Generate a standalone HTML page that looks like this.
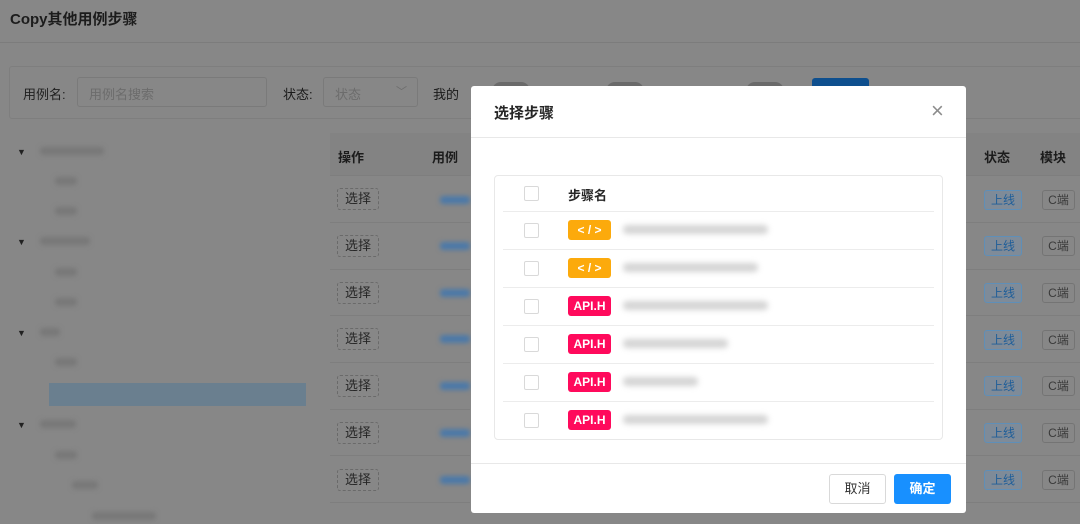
<!DOCTYPE html>
<html style="background:#878787"><head><meta charset="utf-8"><style>
*{box-sizing:border-box;margin:0;padding:0}
html,body{background:#878787}
body{width:1080px;height:524px;overflow:hidden;font-family:"Liberation Sans","Noto Sans CJK SC",sans-serif;position:relative;color:#1a1a1a}
.a{position:absolute}
.blur{filter:blur(2.5px);background:#787878;height:8px;border-radius:3px}
.sel{position:absolute;left:337px;width:42px;height:22px;border:1px dashed #6a6a6a;border-radius:3px;font-size:13px;color:#262626;text-align:center;line-height:20px}
.tagS{position:absolute;left:984px;width:38px;height:20px;border:1px solid #5f8fb8;background:#7f8b98;border-radius:3px;color:#1f5e99;font-size:12px;text-align:center;line-height:18px}
.tagC{position:absolute;left:1042px;width:33px;height:20px;border:1px solid #747474;border-radius:3px;color:#3a3a3a;font-size:12px;text-align:center;line-height:18px}
.hl{position:absolute;left:330px;width:140px;height:1px;background:#7e7e7e}
.modal{position:absolute;left:471px;top:86px;width:495px;height:427px;background:#fff;border-radius:3px}
.cb{position:absolute;left:29px;width:15px;height:15px;border:1px solid #d9d9d9;border-radius:2px;background:#fff}
.badge{position:absolute;left:73px;width:43px;height:20px;border-radius:3px;color:#fff;font-size:12px;font-weight:bold;text-align:center;line-height:20px}
.y{background:#fcaa0c}.p{background:#ff0a5c}
.rl{position:absolute;left:8px;right:8px;height:1px;background:#ececec}
.mb{position:absolute;height:9px;border-radius:4px;background:#d4d4d4;filter:blur(3px)}
</style></head><body>
<div class="a" style="left:10px;top:8px;font-size:15px;font-weight:bold;color:#1c1c1c">Copy其他用例步骤</div>
<div class="a" style="left:0;top:42px;width:1080px;height:1px;background:#7c7c7c"></div>
<div class="a" style="left:9px;top:66px;width:1080px;height:53px;border:1px solid #7e7e7e;border-radius:3px"></div>
<div class="a" style="left:23px;top:84px;font-size:13px;color:#1f1f1f">用例名:</div>
<div class="a" style="left:77px;top:77px;width:190px;height:30px;border:1px solid #7a7a7a;border-radius:3px;font-size:13px;color:#6c6c6c;padding:6px 11px">用例名搜索</div>
<div class="a" style="left:283px;top:84px;font-size:13px">状态:</div>
<div class="a" style="left:323px;top:77px;width:95px;height:30px;border:1px solid #7a7a7a;border-radius:3px;font-size:13px;color:#6c6c6c;padding:6px 11px">状态<span style="position:absolute;right:10px;top:5px;color:#6c6c6c;font-size:11px">﹀</span></div>
<div class="a" style="left:433px;top:84px;font-size:13px">我的</div>
<div class="a" style="left:492px;top:82px;width:38px;height:18px;border-radius:9px;background:#6a6a6a"></div>
<div class="a" style="left:606px;top:82px;width:38px;height:18px;border-radius:9px;background:#6a6a6a"></div>
<div class="a" style="left:746px;top:82px;width:38px;height:18px;border-radius:9px;background:#6a6a6a"></div>
<div class="a" style="left:812px;top:78px;width:57px;height:30px;border-radius:3px;background:#0e4f8e"></div>
<div class="a" style="left:17px;top:147px;font-size:9px;color:#222">▼</div><div class="a blur" style="left:40px;top:147px;width:64px"></div>
<div class="a blur" style="left:55px;top:177px;width:22px"></div>
<div class="a blur" style="left:55px;top:207px;width:22px"></div>
<div class="a" style="left:17px;top:237px;font-size:9px;color:#222">▼</div><div class="a blur" style="left:40px;top:237px;width:50px"></div>
<div class="a blur" style="left:55px;top:268px;width:22px"></div>
<div class="a blur" style="left:55px;top:298px;width:22px"></div>
<div class="a" style="left:17px;top:328px;font-size:9px;color:#222">▼</div><div class="a blur" style="left:40px;top:328px;width:20px"></div>
<div class="a blur" style="left:55px;top:358px;width:22px"></div>
<div class="a" style="left:49px;top:383px;width:257px;height:23px;background:#6a7f8f"></div>
<div class="a" style="left:17px;top:420px;font-size:9px;color:#222">▼</div><div class="a blur" style="left:40px;top:420px;width:36px"></div>
<div class="a blur" style="left:55px;top:451px;width:22px"></div>
<div class="a blur" style="left:72px;top:481px;width:26px"></div>
<div class="a blur" style="left:92px;top:512px;width:64px"></div>
<div class="a" style="left:330px;top:133px;width:750px;height:43px;background:#838383"></div>
<div class="a" style="left:338px;top:147px;font-size:13px;font-weight:bold;color:#1c1c1c">操作</div>
<div class="a" style="left:432px;top:147px;font-size:13px;font-weight:bold;color:#1c1c1c">用例</div>
<div class="a" style="left:984px;top:147px;font-size:13px;font-weight:bold;color:#1c1c1c">状态</div>
<div class="a" style="left:1040px;top:147px;font-size:13px;font-weight:bold;color:#1c1c1c">模块</div>
<div class="a" style="left:966px;top:175px;width:114px;height:1px;background:#7e7e7e"></div>
<div class="hl" style="top:175px"></div>
<div class="sel" style="top:188px">选择</div><div class="hl" style="top:222px"></div>
<div class="sel" style="top:235px">选择</div><div class="hl" style="top:269px"></div>
<div class="sel" style="top:282px">选择</div><div class="hl" style="top:315px"></div>
<div class="sel" style="top:328px">选择</div><div class="hl" style="top:362px"></div>
<div class="sel" style="top:375px">选择</div><div class="hl" style="top:409px"></div>
<div class="sel" style="top:422px">选择</div><div class="hl" style="top:455px"></div>
<div class="sel" style="top:469px">选择</div><div class="hl" style="top:502px"></div>
<div class="a blur" style="left:440px;top:196px;width:30px;background:#4c79a8"></div>
<div class="a blur" style="left:440px;top:242px;width:30px;background:#4c79a8"></div>
<div class="a blur" style="left:440px;top:289px;width:30px;background:#4c79a8"></div>
<div class="a blur" style="left:440px;top:335px;width:30px;background:#4c79a8"></div>
<div class="a blur" style="left:440px;top:382px;width:30px;background:#4c79a8"></div>
<div class="a blur" style="left:440px;top:429px;width:30px;background:#4c79a8"></div>
<div class="a blur" style="left:440px;top:476px;width:30px;background:#4c79a8"></div>
<div class="tagS" style="top:190px">上线</div><div class="tagC" style="top:190px">C端</div>
<div class="tagS" style="top:236px">上线</div><div class="tagC" style="top:236px">C端</div>
<div class="tagS" style="top:283px">上线</div><div class="tagC" style="top:283px">C端</div>
<div class="tagS" style="top:330px">上线</div><div class="tagC" style="top:330px">C端</div>
<div class="tagS" style="top:376px">上线</div><div class="tagC" style="top:376px">C端</div>
<div class="tagS" style="top:423px">上线</div><div class="tagC" style="top:423px">C端</div>
<div class="tagS" style="top:470px">上线</div><div class="tagC" style="top:470px">C端</div>
<div class="a" style="left:966px;top:222px;width:114px;height:1px;background:#7e7e7e"></div>
<div class="a" style="left:966px;top:269px;width:114px;height:1px;background:#7e7e7e"></div>
<div class="a" style="left:966px;top:315px;width:114px;height:1px;background:#7e7e7e"></div>
<div class="a" style="left:966px;top:362px;width:114px;height:1px;background:#7e7e7e"></div>
<div class="a" style="left:966px;top:409px;width:114px;height:1px;background:#7e7e7e"></div>
<div class="a" style="left:966px;top:455px;width:114px;height:1px;background:#7e7e7e"></div>
<div class="a" style="left:966px;top:502px;width:114px;height:1px;background:#7e7e7e"></div>
<div class="modal">
 <div class="a" style="left:23px;top:16px;font-size:15px;font-weight:bold;color:#262626">选择步骤</div>
 <div class="a" style="left:460px;top:12px;font-size:22px;color:#8c8c8c;font-weight:300">×</div>
 <div class="a" style="left:0;top:51px;width:495px;height:1px;background:#e8e8e8"></div>
 <div class="a" style="left:23px;top:89px;width:449px;height:265px;border:1px solid #e8e8e8;border-radius:4px">
  <div class="cb" style="top:10px"></div>
  <div class="a" style="left:73px;top:9px;font-size:13px;font-weight:bold;color:#262626">步骤名</div>
  <div class="rl" style="top:35px"></div>
  <div class="cb" style="top:47px"></div><div class="badge y" style="top:44px">&lt; / &gt;</div><div class="mb" style="left:128px;top:49px;width:145px"></div>
  <div class="rl" style="top:73px"></div>
  <div class="cb" style="top:85px"></div><div class="badge y" style="top:82px">&lt; / &gt;</div><div class="mb" style="left:128px;top:87px;width:135px"></div>
  <div class="rl" style="top:111px"></div>
  <div class="cb" style="top:123px"></div><div class="badge p" style="top:120px">API.H</div><div class="mb" style="left:128px;top:125px;width:145px"></div>
  <div class="rl" style="top:149px"></div>
  <div class="cb" style="top:161px"></div><div class="badge p" style="top:158px">API.H</div><div class="mb" style="left:128px;top:163px;width:105px"></div>
  <div class="rl" style="top:187px"></div>
  <div class="cb" style="top:199px"></div><div class="badge p" style="top:196px">API.H</div><div class="mb" style="left:128px;top:201px;width:75px"></div>
  <div class="rl" style="top:225px"></div>
  <div class="cb" style="top:237px"></div><div class="badge p" style="top:234px">API.H</div><div class="mb" style="left:128px;top:239px;width:145px"></div>
 </div>
 <div class="a" style="left:0;top:377px;width:495px;height:1px;background:#e8e8e8"></div>
 <div class="a" style="left:358px;top:388px;width:57px;height:30px;border:1px solid #d9d9d9;border-radius:3px;font-size:13px;color:#333;text-align:center;line-height:28px">取消</div>
 <div class="a" style="left:423px;top:388px;width:57px;height:30px;background:#1890ff;border-radius:3px;font-size:13px;color:#fff;text-align:center;line-height:30px;font-weight:bold">确定</div>
</div>
</body></html>
